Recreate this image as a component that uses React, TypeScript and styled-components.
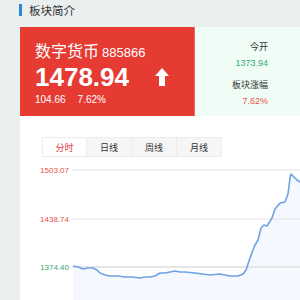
import React, { useState } from "react";
import styled, { createGlobalStyle } from "styled-components";

const GlobalStyle = createGlobalStyle`
  html, body {
    margin: 0;
    padding: 0;
    background: #e9efef;
    font-family: "Liberation Sans", "Noto Sans CJK SC", sans-serif;
  }
`;

const tabs = ["分时", "日线", "周线", "月线"];

// price curve, in chart coordinates
const curve: [number, number][] = [
  [35, 106], [40, 107], [45, 109], [50, 108], [55, 108], [59, 110], [62, 113],
  [67, 115], [72, 116], [80, 116], [87, 117], [94, 117], [102, 118], [107, 117],
  [112, 117], [117, 116], [122, 113], [127, 113], [137, 111], [142, 112],
  [147, 112], [157, 113], [172, 115], [182, 114], [192, 116], [200, 116],
  [205, 114], [208, 110], [212, 98], [217, 85], [220, 80], [223, 68], [226, 65],
  [229, 66], [234, 58], [237, 49], [242, 43], [247, 42], [250, 34], [252, 18],
  [253, 14], [256, 17], [259, 20], [262, 22], [266, 24],
];

export default function App() {
  const [active, setActive] = useState(0);
  const line = curve.map(([x, y], i) => `${i ? "L" : "M"}${x} ${y}`).join(" ");
  const area = `${line} L266 140 L35 140 Z`;

  return (
    <Page>
      <GlobalStyle />
      <Header>
        <HeaderBar />
        板块简介
      </Header>

      <Summary>
        <QuoteCard>
          <NameRow>
            数字货币<Code>885866</Code>
          </NameRow>
          <PriceRow>
            <Price>1478.94</Price>
            <svg width="14" height="18" viewBox="0 0 14 18">
              <path d="M7 0 L14 8 L10 8 L10 18 L4 18 L4 8 L0 8 Z" fill="#fff" />
            </svg>
          </PriceRow>
          <ChangeRow>
            <span>104.66</span>
            <span>7.62%</span>
          </ChangeRow>
        </QuoteCard>

        <StatPanel>
          <Stat>
            <StatLabel>今开</StatLabel>
            <StatValue $up={false}>1373.94</StatValue>
          </Stat>
          <Stat>
            <StatLabel>板块涨幅</StatLabel>
            <StatValue $up>7.62%</StatValue>
          </Stat>
        </StatPanel>
      </Summary>

      <ChartPanel>
        <Tabs>
          {tabs.map((t, i) => (
            <Tab key={t} $active={i === active} onClick={() => setActive(i)}>
              {t}
            </Tab>
          ))}
        </Tabs>
        <ChartSvg width="262" height="140" viewBox="0 0 262 140">
          <path d={area} fill="#f5f8fe" />
          <line x1="34" y1="10" x2="262" y2="10" stroke="#e3e3e3" strokeWidth="1" />
          <line x1="34" y1="59" x2="262" y2="59" stroke="#e3e3e3" strokeWidth="1" />
          <line x1="34" y1="107" x2="262" y2="107" stroke="#e6e6e6" strokeWidth="2" />
          <path d={line} fill="none" stroke="#6ea3e3" strokeWidth="1.6" strokeLinejoin="round" />
          <AxisText x="31" y="13" textAnchor="end" fill="#e8514a">1503.07</AxisText>
          <AxisText x="31" y="62" textAnchor="end" fill="#e8514a">1438.74</AxisText>
          <AxisText x="31" y="110" textAnchor="end" fill="#3aa877">1374.40</AxisText>
        </ChartSvg>
      </ChartPanel>
    </Page>
  );
}

const Page = styled.div`
  width: 300px;
  height: 300px;
  overflow: hidden;
  padding-left: 20px;
  box-sizing: border-box;
`;

const Header = styled.div`
  height: 20px;
  margin-bottom: 7px;
  margin-left: -1px;
  display: flex;
  align-items: center;
  gap: 7px;
  font-size: 11.5px;
  color: #333;
  font-family: "Noto Sans CJK SC", sans-serif;
`;

const HeaderBar = styled.span`
  width: 3px;
  height: 12px;
  background: #2f86d6;
`;

const Summary = styled.div`
  display: flex;
  height: 89px;
`;

const QuoteCard = styled.div`
  width: 175px;
  box-sizing: border-box;
  padding: 13px 25px 0 15px;
  background: #e63b33;
  border-right: 1px solid #f06a63;
  color: #fff;
`;

const NameRow = styled.div`
  display: flex;
  align-items: baseline;
  gap: 3px;
  height: 20px;
  line-height: 20px;
  font-size: 16px;
  font-family: "Noto Sans CJK SC", sans-serif;
`;

const Code = styled.span`
  font-size: 13px;
  font-family: "Liberation Sans", sans-serif;
`;

const PriceRow = styled.div`
  margin-top: 3px;
  height: 28px;
  display: flex;
  align-items: center;
  justify-content: space-between;
`;

const Price = styled.span`
  font-size: 26px;
  font-weight: 700;
  line-height: 28px;
`;

const ChangeRow = styled.div`
  margin-top: 3px;
  display: flex;
  gap: 12px;
  font-size: 10px;
  line-height: 12px;
`;

const StatPanel = styled.div`
  flex: 1;
  background: #effdf6;
  padding: 14px 32px 0 0;
  display: flex;
  flex-direction: column;
  align-items: flex-end;
  gap: 10px;
`;

const Stat = styled.div`
  display: flex;
  flex-direction: column;
  align-items: flex-end;
  gap: 4px;
`;

const StatLabel = styled.div`
  font-size: 9px;
  line-height: 12px;
  color: #333;
  font-family: "Noto Sans CJK SC", sans-serif;
`;

const StatValue = styled.div<{ $up: boolean }>`
  font-size: 9px;
  line-height: 12px;
  color: ${(p) => (p.$up ? "#e8514a" : "#3aa877")};
`;

const ChartPanel = styled.div`
  background: #fff;
  height: 200px;
  padding: 21px 0 0 22px;
`;

const Tabs = styled.div`
  display: flex;
`;

const Tab = styled.div<{ $active: boolean }>`
  width: 45px;
  height: 20px;
  box-sizing: border-box;
  display: flex;
  align-items: center;
  justify-content: center;
  font-size: 9px;
  font-family: "Noto Sans CJK SC", sans-serif;
  color: ${(p) => (p.$active ? "#e4393c" : "#333")};
  background: ${(p) => (p.$active ? "#fff" : "#f6f6f6")};
  border: 1px solid #ececec;
  border-left: none;
  &:first-child {
    border-left: 1px solid #ececec;
  }
  cursor: pointer;
`;

const ChartSvg = styled.svg`
  display: block;
  margin: 3px 0 0 -4px;
  overflow: hidden;
`;

const AxisText = styled.text`
  font-size: 8px;
  font-family: "Liberation Sans", sans-serif;
`;
